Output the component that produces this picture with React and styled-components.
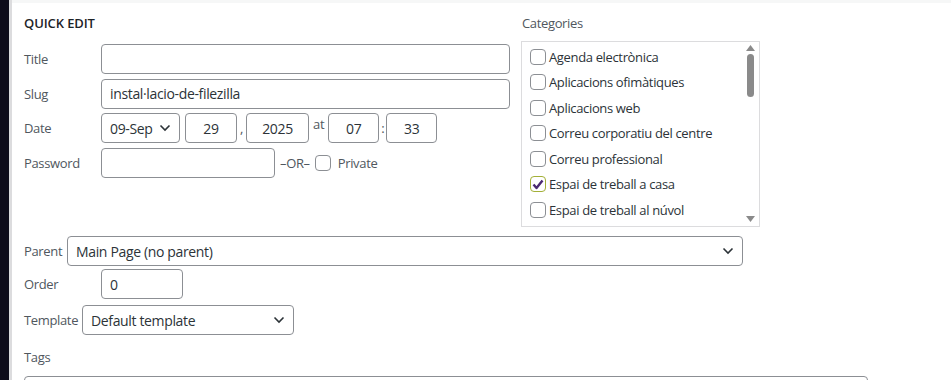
import React from "react";
import styled, { createGlobalStyle } from "styled-components";

const Global = createGlobalStyle`
  html, body { margin: 0; padding: 0; background: #fff; }
  body { font-family: "Open Sans", "Noto Sans", sans-serif; color: #2c3338; overflow: hidden; letter-spacing: -0.35px; }
  * { box-sizing: border-box; }
`;

const Page = styled.div`
  display: flex;
  width: 951px;
  height: 380px;
  overflow: hidden;
`;

const SideStrip = styled.div`
  width: 9px;
  flex: none;
  background: #0e0c1a;
`;

const Edge = styled.div`
  width: 3px;
  flex: none;
  background: #dcdcde;
`;

const Panel = styled.div`
  flex: 1;
  display: flex;
  flex-direction: column;
  border-top: 3px solid #f6f7f7;
  padding: 0 0 0 12px;
`;

const Top = styled.div`
  display: flex;
  gap: 11px;
`;

const Fields = styled.div`
  width: 486px;
  display: flex;
  flex-direction: column;
`;

const Legend = styled.div`
  font-size: 13px;
  font-weight: 600;
  letter-spacing: -0.1px;
  color: #1d2327;
  height: 41px;
  line-height: 40px;
`;

const Rows = styled.div`
  display: flex;
  flex-direction: column;
  gap: 4.5px;
`;

const Row = styled.div`
  display: flex;
  align-items: center;
  height: 30px;
`;

const Label = styled.span`
  width: ${(p) => (p.$w ? p.$w : "77px")};
  flex: none;
  font-size: 13px;
  color: #50575e;
`;

const Input = styled.div`
  width: ${(p) => p.$w};
  height: 30px;
  flex: none;
  border: 1px solid #8c8f94;
  border-radius: 4px;
  background: #fff;
  font-size: 14px;
  color: #2c3338;
  display: flex;
  align-items: center;
  justify-content: ${(p) => (p.$center ? "center" : "flex-start")};
  padding: 0 8px;
  margin-left: ${(p) => p.$ml || "0"};
`;

const Select = styled(Input)`
  justify-content: space-between;
  padding: 0 8px 0 8px;
`;

const Sep = styled.span`
  font-size: 13px;
  color: #50575e;
  margin: 0 ${(p) => p.$m || "4px"};
  align-self: ${(p) => (p.$top ? "flex-start" : "center")};
  padding-top: ${(p) => p.$pt || "0"};
`;

const Box = styled.span`
  width: 16px;
  height: 16px;
  flex: none;
  border: ${(p) => (p.$checked ? "1.5px solid #a3b038" : "1px solid #8c8f94")};
  border-radius: 4px;
  background: #fff;
  display: flex;
  align-items: center;
  justify-content: center;
`;

const Cats = styled.div`
  width: 239px;
  display: flex;
  flex-direction: column;
`;

const CatTitle = styled.div`
  font-size: 13px;
  color: #50575e;
  height: 38px;
  line-height: 40px;
  padding-left: 1px;
`;

const CatBox = styled.div`
  height: 186px;
  border: 1px solid #dcdcde;
  display: flex;
  background: #fff;
`;

const CatList = styled.ul`
  list-style: none;
  margin: 0;
  padding: 2px 0 0 8px;
  flex: 1;
`;

const CatItem = styled.li`
  height: 25.5px;
  display: flex;
  align-items: center;
  gap: 3px;
  font-size: 13px;
  color: #2c3338;
`;

const Scroll = styled.div`
  width: 13px;
  margin-right: 2px;
  display: flex;
  flex-direction: column;
  align-items: center;
  padding: 3px 0 4px;
`;

const Thumb = styled.div`
  width: 7px;
  height: 43px;
  border-radius: 4px;
  background: #8a8a8a;
  margin-top: 3px;
`;

const Spacer = styled.div`
  flex: 1;
`;

const Bottom = styled.div`
  display: flex;
  flex-direction: column;
  margin-top: 9px;
`;

const BRow = styled.div`
  display: flex;
  align-items: center;
  height: 30px;
  margin-bottom: ${(p) => p.$mb || "0"};
`;

const TagsLabel = styled.div`
  font-size: 13px;
  color: #50575e;
  margin-top: 13px;
  height: 20px;
`;

const TextArea = styled.div`
  width: 844px;
  height: 40px;
  margin-top: 8px;
  border: 1px solid #8c8f94;
  border-radius: 4px;
`;

const Chevron = () => (
  <svg width="12" height="8" viewBox="0 0 12 8">
    <path d="M1.5 1.5 L6 6 L10.5 1.5" fill="none" stroke="#2c3338" strokeWidth="1.6" />
  </svg>
);

const Check = () => (
  <svg width="12" height="11" viewBox="0 0 12 11">
    <path d="M1.5 5.5 L4.5 9 L10.5 1.5" fill="none" stroke="#4b2a72" strokeWidth="2.4" strokeLinejoin="round" />
  </svg>
);

const Arrow = ({ down }) => (
  <svg width="9" height="6" viewBox="0 0 9 6">
    <path d={down ? "M0 0 L9 0 L4.5 6 Z" : "M0 6 L9 6 L4.5 0 Z"} fill="#8a8a8a" />
  </svg>
);

const categories = [
  ["Agenda electrònica", false],
  ["Aplicacions ofimàtiques", false],
  ["Aplicacions web", false],
  ["Correu corporatiu del centre", false],
  ["Correu professional", false],
  ["Espai de treball a casa", true],
  ["Espai de treball al núvol", false],
];

export default function App() {
  return (
    <Page>
      <Global />
      <SideStrip />
      <Edge />
      <Panel>
        <Top>
          <Fields>
            <Legend>QUICK EDIT</Legend>
            <Rows>
              <Row>
                <Label>Title</Label>
                <Input $w="409px" />
              </Row>
              <Row>
                <Label>Slug</Label>
                <Input $w="409px">instal·lacio-de-filezilla</Input>
              </Row>
              <Row>
                <Label>Date</Label>
                <Select $w="79px">
                  <span>09-Sep</span>
                  <Chevron />
                </Select>
                <Input $w="52px" $center $ml="5px">29</Input>
                <Sep $m="3px">,</Sep>
                <Input $w="63px" $center>2025</Input>
                <Sep $m="4px" $top $pt="2px">at</Sep>
                <Input $w="51px" $center>07</Input>
                <Sep $m="2px">:</Sep>
                <Input $w="51px" $center>33</Input>
              </Row>
              <Row>
                <Label>Password</Label>
                <Input $w="174px" />
                <Sep $m="5px">–OR–</Sep>
                <Box />
                <Sep $m="7px">Private</Sep>
              </Row>
            </Rows>
          </Fields>
          <Cats>
            <CatTitle>Categories</CatTitle>
            <CatBox>
              <CatList>
                {categories.map(([name, checked]) => (
                  <CatItem key={name}>
                    <Box $checked={checked}>{checked && <Check />}</Box>
                    {name}
                  </CatItem>
                ))}
              </CatList>
              <Scroll>
                <Arrow />
                <Thumb />
                <Spacer />
                <Arrow down />
              </Scroll>
            </CatBox>
          </Cats>
        </Top>
        <Bottom>
          <BRow $mb="3px">
            <Label $w="43px">Parent</Label>
            <Select $w="676px">
              <span>Main Page (no parent)</span>
              <Chevron />
            </Select>
          </BRow>
          <BRow $mb="6px">
            <Label>Order</Label>
            <Input $w="82px">0</Input>
          </BRow>
          <BRow>
            <Label $w="58px">Template</Label>
            <Select $w="212px">
              <span>Default template</span>
              <Chevron />
            </Select>
          </BRow>
          <TagsLabel>Tags</TagsLabel>
          <TextArea />
        </Bottom>
      </Panel>
    </Page>
  );
}
